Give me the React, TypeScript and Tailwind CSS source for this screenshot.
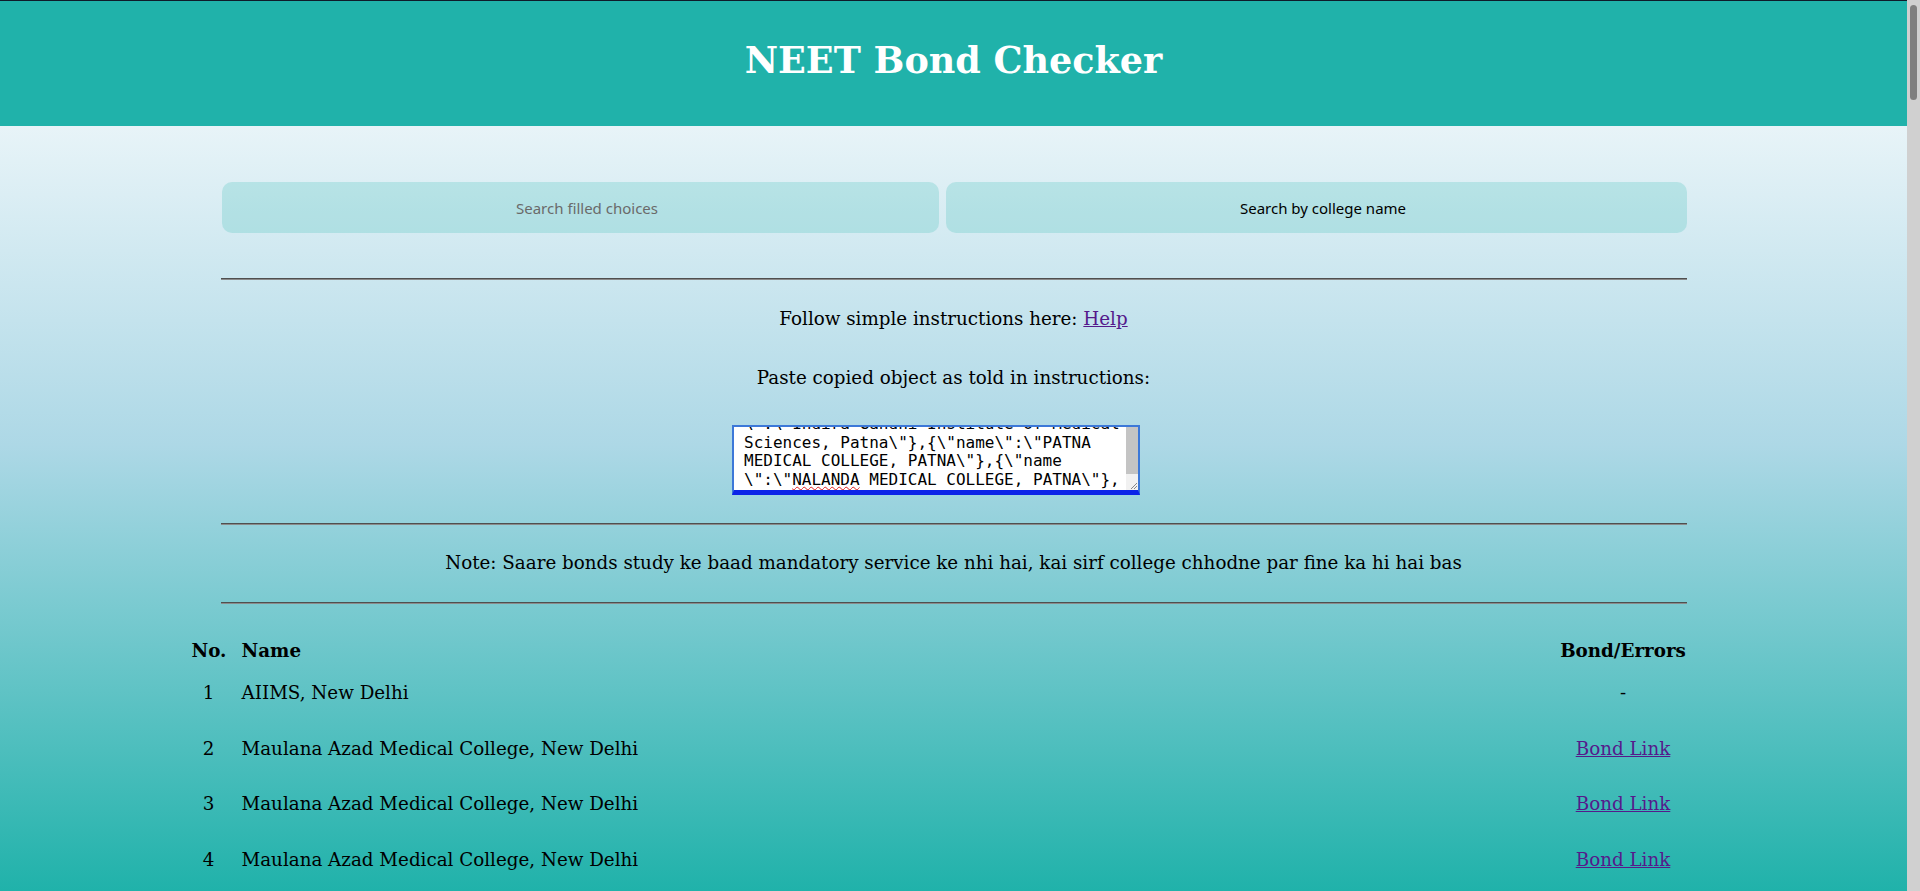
import React from 'react';

type Row = { name: string; bond: string | null };

const names = [
  'Maulana Azad Medical College, New Delhi',
  'Vardhman Mahavir Medical College & Safdarjung Hospital, New Delhi',
  'University College of Medical Sciences, Delhi',
  'Lady Hardinge Medical College, New Delhi',
  'Indira Gandhi Institute of Medical Sciences, Patna',
  'PATNA MEDICAL COLLEGE, PATNA',
  'NALANDA MEDICAL COLLEGE, PATNA',
  'King George Medical University, Lucknow',
  'Institute of Medical Sciences, BHU, Varanasi',
  'Grant Government Medical College, Mumbai',
  'Seth GS Medical College, Mumbai',
  'Madras Medical College, Chennai',
  'Bangalore Medical College and Research Institute, Bangalore',
  'Government Medical College, Chandigarh',
  'Kasturba Medical College, Manipal',
];

const rows: Row[] = [
  { name: 'AIIMS, New Delhi', bond: null },
  { name: 'Maulana Azad Medical College, New Delhi', bond: '#' },
  { name: 'Maulana Azad Medical College, New Delhi', bond: '#' },
  { name: 'Maulana Azad Medical College, New Delhi', bond: '#' },
  ...Array.from({ length: 136 }, (_, i) => ({
    name: names[(i + 1) % names.length],
    bond: i % 5 === 3 ? null : '#',
  })),
];

const textLines = [
  '\\":\\"Indira Gandhi Institute of Medical',
  'Sciences, Patna\\"},{\\"name\\":\\"PATNA',
  'MEDICAL COLLEGE, PATNA\\"},{\\"name',
];

function Rule() {
  return <div className="h-[2px] border-t border-b border-t-[#4f4f4f] border-b-[#8a8a8a]" />;
}

function PasteBox() {
  return (
    <div className="relative mr-[35px] flex h-[70px] w-[408px] overflow-hidden border-2 border-[#3c78d8] border-b-[5px] border-b-[#0b24e8] bg-white">
      <div className="-mt-[12px] flex-1 pl-[10px] font-['DejaVu_Sans_Mono',monospace] text-[16px] leading-[18.6px] text-black">
        {textLines.map((l, i) => (
          <div key={i} className="whitespace-pre">
            {l}
          </div>
        ))}
        <div className="whitespace-pre">
          {'\\":\\"'}
          <span className="underline decoration-wavy decoration-[#e02020] decoration-1 underline-offset-1">NALANDA</span>
          {' MEDICAL COLLEGE, PATNA\\"},'}
        </div>
      </div>
      {/* textarea scrollbar */}
      <div className="flex w-[12px] flex-col bg-[#f1f1f1]">
        <div className="h-[47px] bg-[#c4c4c4]" />
      </div>
      <svg className="absolute right-0 bottom-0" width="10" height="10" viewBox="0 0 10 10">
        <path d="M9 3 L3 9 M9 6 L6 9" stroke="#888" strokeWidth="1" />
      </svg>
    </div>
  );
}

export default function App() {
  return (
    <div className="min-h-screen bg-fixed bg-[linear-gradient(to_bottom,#ffffff,#add8e6,#20b2aa)] font-['DejaVu_Serif',serif] text-[18.3px] leading-[normal] text-black">
      {/* page scrollbar */}
      <div className="fixed top-0 right-0 bottom-0 w-[13px] bg-[#d0d0d0]">
        <div className="mt-[5px] ml-[3px] h-[95px] w-[7px] rounded-full bg-[#7f7f7f]" />
      </div>

      <div className="mr-[13px]">
        {/* Header */}
        <header className="h-[126px] border-t border-[#0f1b2a] bg-[#20b2aa] pt-[38px] text-center">
          <h1 className="text-[36.5px] leading-[normal] font-bold text-white">NEET Bond Checker</h1>
        </header>

        <main className="mx-auto w-[1466px] pb-10">
          {/* Search */}
          <div className="mt-[56px] flex gap-[7px] pl-[1px]">
            <input
              type="text"
              placeholder="Search filled choices"
              className="h-[51px] w-[717px] rounded-[10px] bg-[#20b2aa]/20 pl-[14px] text-center font-['Noto_Sans',sans-serif] text-[15px] text-black outline-none placeholder:text-[#6a6a6a]"
            />
            <button className="h-[51px] flex-1 rounded-[10px] bg-[#20b2aa]/20 pl-[14px] text-center font-['Noto_Sans',sans-serif] text-[15px] text-black">
              Search by college name
            </button>
          </div>

          <div className="mt-[45px]">
            <Rule />
          </div>

          <p className="mt-[28px] text-center">
            Follow simple instructions here:{' '}
            <a href="#" className="text-[#551a8b] underline">
              Help
            </a>
          </p>
          <p className="mt-[38px] text-center">Paste copied object as told in instructions:</p>

          <div className="mt-[37px] flex justify-center">
            <PasteBox />
          </div>

          <div className="mt-[28px]">
            <Rule />
          </div>
          <p className="mt-[27px] text-center">
            Note: Saare bonds study ke baad mandatory service ke nhi hai, kai sirf college chhodne par fine ka hi hai bas
          </p>
          <div className="mt-[29px]">
            <Rule />
          </div>

          {/* Table */}
          <div className="-ml-[29px] mt-[32px] grid grid-cols-[34px_1fr_127px] gap-x-4">
            <div className="flex h-[29px] items-center font-bold">No.</div>
            <div className="flex h-[29px] items-center font-bold">Name</div>
            <div className="flex h-[29px] items-center justify-center font-bold">Bond/Errors</div>
            {rows.map((r, i) => (
              <React.Fragment key={i}>
                <div className="flex h-[55.5px] items-center justify-center">{i + 1}</div>
                <div className="flex h-[55.5px] items-center">{r.name}</div>
                <div className="flex h-[55.5px] items-center justify-center">
                  {r.bond ? (
                    <a href={r.bond} className="text-[#551a8b] underline">
                      Bond Link
                    </a>
                  ) : (
                    '-'
                  )}
                </div>
              </React.Fragment>
            ))}
          </div>
        </main>
      </div>
    </div>
  );
}
